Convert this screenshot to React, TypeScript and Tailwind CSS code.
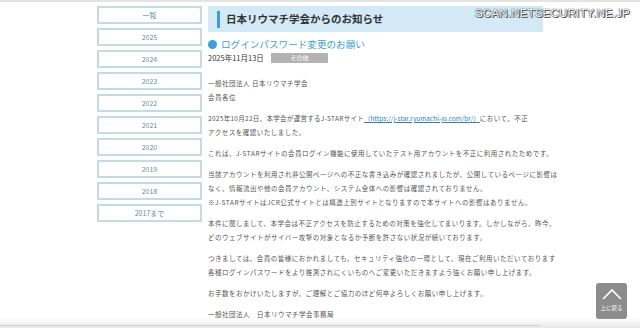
import React from 'react';

const years = ['一覧', '2025', '2024', '2023', '2022', '2021', '2020', '2019', '2018', '2017まで'];

const jp = "font-['Noto_Sans_CJK_JP','Noto_Sans',sans-serif]";

const Paragraph: React.FC<{ lines: React.ReactNode[] }> = ({ lines }) => (
    <div className="mb-[7px]">
        {lines.map((line, i) => (
            <div key={i} className="h-[14px] leading-[14px] whitespace-nowrap">
                {line}
            </div>
        ))}
    </div>
);

const App: React.FC = () => {
    return (
        <div className={`relative w-[640px] h-[328px] overflow-hidden bg-white ${jp}`}>
            <div className="h-[2px] bg-[#e4e4e4]" />

            <div className="flex pt-[4px] pl-[97px] gap-[6px]">
                {/* サイドメニュー */}
                <div className="flex flex-col gap-[4px] w-[105px]">
                    {years.map((y) => (
                        <div
                            key={y}
                            className="h-[18px] border-2 border-[#c3dbe1] flex items-center justify-center text-[7px] text-[#5f8e9c]"
                        >
                            {y}
                        </div>
                    ))}
                </div>

                {/* 本文 */}
                <div className="w-[335px]">
                    <div className="h-[26px] bg-[#d3e9f5] flex items-center pl-[9px]">
                        <div className="w-[3px] h-[17px] bg-[#3d9fd3]" />
                        <div className="ml-[6px] text-[10.5px] font-bold text-[#333]">
                            日本リウマチ学会からのお知らせ
                        </div>
                    </div>

                    <div className="flex items-center mt-[6px] h-[13px]">
                        <div className="w-[9px] h-[9px] rounded-full bg-[#3d9fd3]" />
                        <div className="ml-[4px] text-[9.6px] text-[#3d9fd3]">
                            ログインパスワード変更のお願い
                        </div>
                    </div>

                    <div className="flex items-center mt-[1px] h-[11px]">
                        <div className="text-[7.5px] text-[#333] w-[63px] whitespace-nowrap">2025年11月13日</div>
                        <div className="w-[57px] h-[10px] bg-[#b3b3b3] text-white text-[6px] flex items-center justify-center">
                            その他
                        </div>
                    </div>

                    <div className="mt-[13px] text-[6.5px] text-[#555] tracking-[0.5px]">
                        <Paragraph lines={['一般社団法人 日本リウマチ学会', '会員各位']} />
                        <Paragraph
                            lines={[
                                <>
                                    <span className="tracking-[0.3px]">2025年10月22日、本学会が運営するJ-STARサイト</span>
                                    <span className="text-[#2f7fc1] underline tracking-[0px]">（https://j-star.ryumachi-jo.com/br/）</span>
                                    において、不正
                                </>,
                                'アクセスを確認いたしました。',
                            ]}
                        />
                        <Paragraph
                            lines={['これは、J-STARサイトの会員ログイン機能に使用していたテスト用アカウントを不正に利用されたためです。']}
                        />
                        <Paragraph
                            lines={[
                                '当該アカウントを利用され非公開ページへの不正な書き込みが確認されましたが、公開しているページに影響は',
                                'なく、情報流出や他の会員アカウント、システム全体への影響は確認されておりません。',
                                '※J-STARサイトはJCR公式サイトとは構造上別サイトとなりますので本サイトへの影響はありません。',
                            ]}
                        />
                        <Paragraph
                            lines={[
                                '本件に関しまして、本学会は不正アクセスを防止するための対策を強化してまいります。しかしながら、昨今、',
                                'どのウェブサイトがサイバー攻撃の対象となるか予断を許さない状況が続いております。',
                            ]}
                        />
                        <Paragraph
                            lines={[
                                'つきましては、会員の皆様におかれましても、セキュリティ強化の一環として、現在ご利用いただいております',
                                '各種ログインパスワードをより推測されにくいものへご変更いただきますよう強くお願い申し上げます。',
                            ]}
                        />
                        <Paragraph lines={['お手数をおかけいたしますが、ご理解とご協力のほど何卒よろしくお願い申し上げます。']} />
                        <Paragraph lines={['一般社団法人　日本リウマチ学会事務局']} />
                    </div>
                </div>
            </div>

            {/* 透かし */}
            <div className="absolute top-[5px] left-[475px] text-[11.5px] text-white font-['Liberation_Sans',sans-serif] tracking-[0.2px] [text-shadow:0_0_1px_#333,0_0_1px_#333,1px_1px_0_#555]">
                SCAN.NETSECURITY.NE.JP
            </div>

            {/* 上に戻る */}
            <div className="absolute left-[596px] top-[283px] w-[31px] h-[36px] rounded-[3px] bg-[#8c8c8c] flex flex-col items-center">
                <svg width="22" height="14" viewBox="0 0 22 14" className="mt-[4px]">
                    <path d="M2 12 L11 3 L20 12" fill="none" stroke="white" strokeWidth="1.6" />
                </svg>
                <div className="text-[5.5px] text-white mt-[3px] whitespace-nowrap">上に戻る</div>
            </div>

            {/* 下端の影 */}
            <div className="absolute left-0 right-0 bottom-0 h-[10px] bg-gradient-to-b from-transparent to-[#e8e8e8]" />
            <div className="absolute left-0 w-[540px] bottom-[2px] h-px bg-[#d0d0d0]" />
        </div>
    );
};

export default App;
